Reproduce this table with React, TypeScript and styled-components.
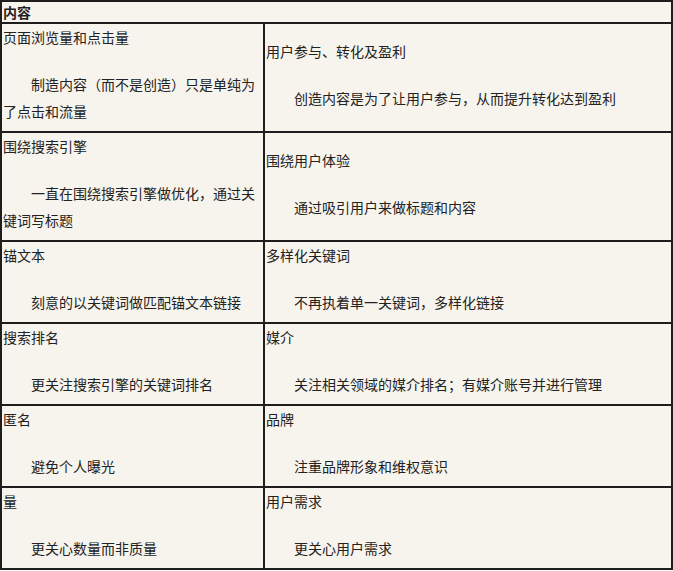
import React from "react";
import styled, { createGlobalStyle } from "styled-components";

const GlobalStyle = createGlobalStyle`
  html, body {
    margin: 0;
    padding: 0;
    background: #ffffff;
  }
  body {
    font-family: "Noto Sans CJK SC", "Noto Sans", sans-serif;
    font-size: 14px;
    color: #222;
  }
`;

const Table = styled.div`
  width: 673px;
  box-sizing: border-box;
  border: 1px solid #1e1e1e;
  display: grid;
  grid-template-columns: 263px 408px;
  background: #f7f4ed;
`;

const HeaderCell = styled.div`
  grid-column: 1 / span 2;
  border: 1px solid #1e1e1e;
  padding: 0 1px;
  height: 20px;
  line-height: 20px;
  font-weight: bold;
`;

interface CellProps {
  $center?: boolean;
}

const Cell = styled.div<CellProps>`
  border: 1px solid #1e1e1e;
  padding: 0 1px;
  display: flex;
  flex-direction: column;
  justify-content: ${({ $center }) => ($center ? "center" : "flex-start")};
  line-height: 27px;
`;

const Title = styled.div`
  white-space: nowrap;
`;

const Body = styled.p`
  margin: 20px 0 6px;
  text-indent: 2em;
`;

interface Row {
  leftTitle: string;
  leftBody: string;
  rightTitle: string;
  rightBody: string;
}

const rows: Row[] = [
  {
    leftTitle: "页面浏览量和点击量",
    leftBody: "制造内容（而不是创造）只是单纯为了点击和流量",
    rightTitle: "用户参与、转化及盈利",
    rightBody: "创造内容是为了让用户参与，从而提升转化达到盈利",
  },
  {
    leftTitle: "围绕搜索引擎",
    leftBody: "一直在围绕搜索引擎做优化，通过关键词写标题",
    rightTitle: "围绕用户体验",
    rightBody: "通过吸引用户来做标题和内容",
  },
  {
    leftTitle: "锚文本",
    leftBody: "刻意的以关键词做匹配锚文本链接",
    rightTitle: "多样化关键词",
    rightBody: "不再执着单一关键词，多样化链接",
  },
  {
    leftTitle: "搜索排名",
    leftBody: "更关注搜索引擎的关键词排名",
    rightTitle: "媒介",
    rightBody: "关注相关领域的媒介排名；有媒介账号并进行管理",
  },
  {
    leftTitle: "匿名",
    leftBody: "避免个人曝光",
    rightTitle: "品牌",
    rightBody: "注重品牌形象和维权意识",
  },
  {
    leftTitle: "量",
    leftBody: "更关心数量而非质量",
    rightTitle: "用户需求",
    rightBody: "更关心用户需求",
  },
];

export default function App(): React.ReactElement {
  return (
    <>
      <GlobalStyle />
      <Table>
        <HeaderCell>内容</HeaderCell>
        {rows.map((r) => (
          <React.Fragment key={r.leftTitle}>
            <Cell $center>
              <Title>{r.leftTitle}</Title>
              <Body>{r.leftBody}</Body>
            </Cell>
            <Cell $center>
              <Title>{r.rightTitle}</Title>
              <Body>{r.rightBody}</Body>
            </Cell>
          </React.Fragment>
        ))}
      </Table>
    </>
  );
}
